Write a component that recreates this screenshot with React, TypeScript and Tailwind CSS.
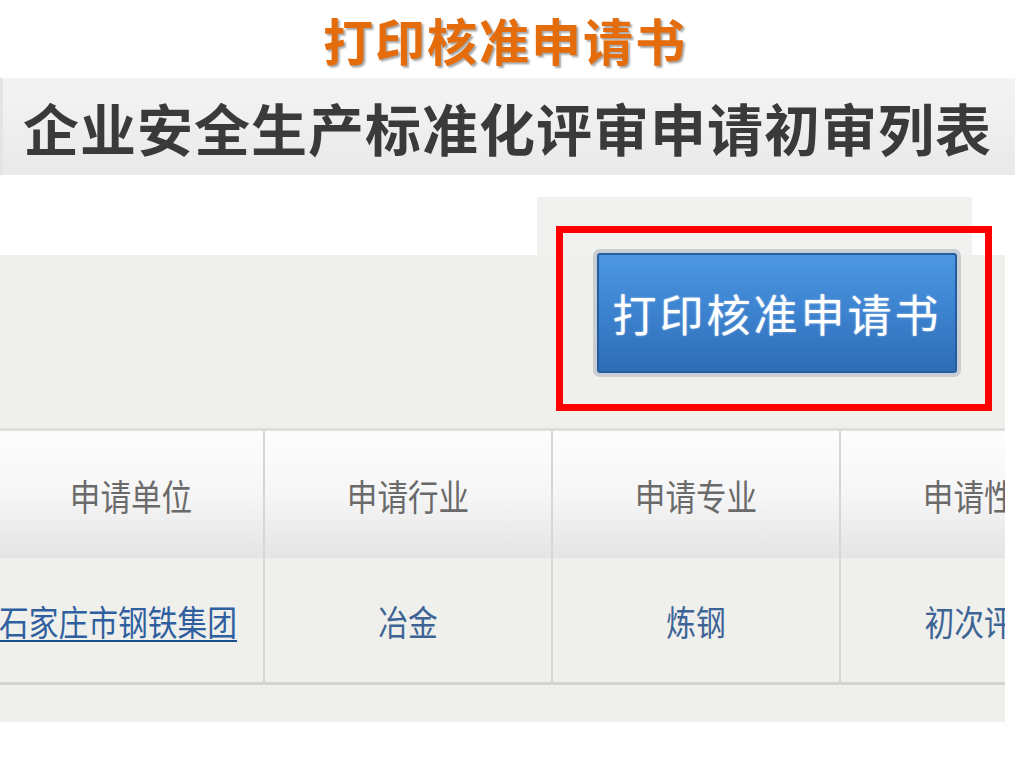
const cjk = { fontFamily: '"Noto Sans CJK SC", "Noto Sans", sans-serif' }

const columns = [
  { head: '申请单位', value: '石家庄市钢铁集团', link: true, width: 'w-[263px]' },
  { head: '申请行业', value: '冶金', width: 'w-[288px]' },
  { head: '申请专业', value: '炼钢', width: 'w-[288px]' },
  { head: '申请性质', value: '初次评审', width: 'w-[288px]' },
]

export default function App() {
  return (
    <div className="relative w-[1024px] h-[768px] bg-white overflow-hidden" style={cjk}>
      {/* slide title */}
      <div className="h-[78px] flex items-center justify-center pr-[14px]">
        <h1 className="text-[50px] leading-none font-bold tracking-[2px] text-[#e46c0a] [text-shadow:2px_2px_2px_rgba(0,0,0,0.35)]">
          打印核准申请书
        </h1>
      </div>

      {/* screenshot heading */}
      <div className="w-[1015px] h-[97px] flex items-center pl-[20px] border-l-[3px] border-[#e4e4e4] bg-gradient-to-b from-[#f4f4f4] to-[#e9e9e9]">
        <span className="text-[56px] leading-none font-bold tracking-[1px] text-[#3a3a3a]">
          企业安全生产标准化评审申请初审列表
        </span>
      </div>

      <div className="h-[22px]" />
      <div className="h-[58px] flex">
        <div className="ml-[537px] w-[435px] bg-[#f1f1f0]" />
      </div>

      {/* main panel */}
      <div className="w-[1005px] h-[467px] bg-[#efefec] flex flex-col">
        <div className="h-[173px] flex items-start pl-[597px]">
          <button className="-mt-[2px] w-[360px] h-[120px] rounded-[3px] border-2 border-[#235d9f] bg-gradient-to-b from-[#4d97e0] via-[#3c82cf] to-[#2e6db5] shadow-[0_0_0_4px_#c9ced4] flex items-center justify-center">
            <span className="text-[44px] leading-none text-white tracking-[3px] [text-shadow:0_0_2px_rgba(255,255,255,0.6)]">
              打印核准申请书
            </span>
          </button>
        </div>

        <div className="border-t-[3px] border-[#dedede] flex-1 flex flex-col overflow-hidden">
          <div className="flex h-[127px]">
            {columns.map((c, i) => (
              <div
                key={c.head}
                className={`${c.width} shrink-0 flex items-center justify-center overflow-hidden whitespace-nowrap bg-gradient-to-b from-[#fdfdfd] via-[#f6f6f6] to-[#e4e4e4] ${i > 0 ? 'border-l-2 border-[#d6d6d6]' : ''}`}
              >
                <span className="inline-block scale-x-[0.85] text-[36px] leading-none text-[#6a6a6a]">{c.head}</span>
              </div>
            ))}
          </div>
          <div className="flex h-[127px] border-b-[3px] border-[#d3d3d1]">
            {columns.map((c, i) => (
              <div
                key={c.head}
                className={`${c.width} shrink-0 flex items-center ${c.link ? 'justify-start' : 'justify-center'} overflow-hidden whitespace-nowrap ${i > 0 ? 'border-l-2 border-[#d6d6d6]' : ''}`}
              >
                {c.link ? (
                  <a className="inline-block origin-left scale-x-[0.85] text-[35px] leading-none text-[#2f5f9e] underline underline-offset-4 decoration-2 decoration-[#1d4f8f] -ml-[1px] w-[276px]">
                    {c.value}
                  </a>
                ) : (
                  <span className="inline-block scale-x-[0.85] text-[35px] leading-none text-[#3d6495]">
                    {c.value}
                  </span>
                )}
              </div>
            ))}
          </div>
          <div className="flex-1" />
        </div>
      </div>

      {/* highlight frame */}
      <div className="absolute left-[556px] top-[226px] w-[436px] h-[185px] border-[7px] border-[#ff0000]" />
    </div>
  )
}
